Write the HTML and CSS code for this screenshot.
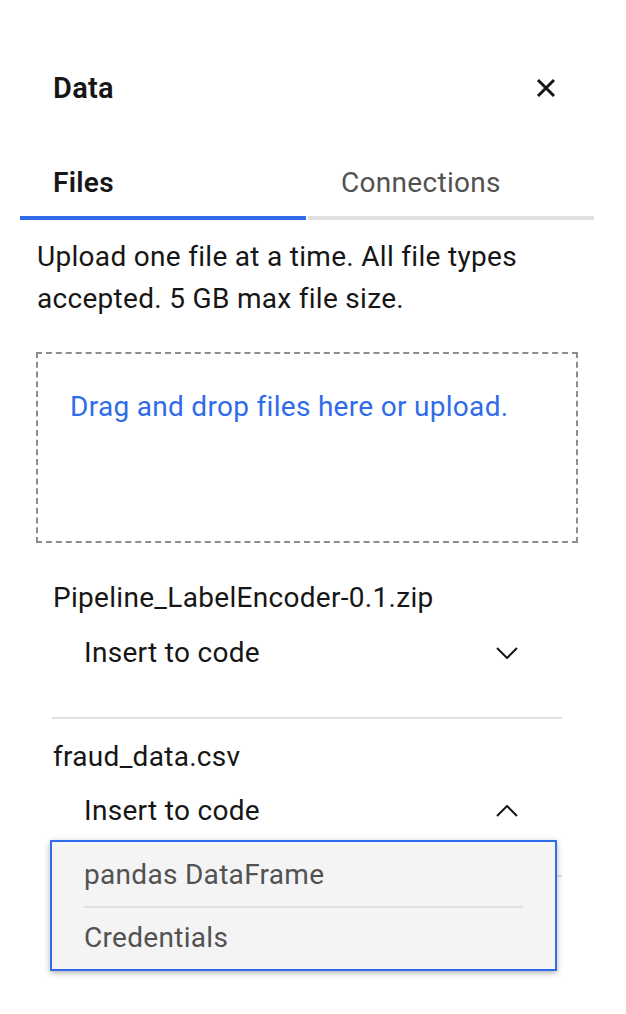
FILE: index.html
```html
<!DOCTYPE html>
<html lang="en">
<head>
<meta charset="utf-8">
<title>Data</title>
<link rel="stylesheet" href="styles.css">
</head>
<body>
<div class="panel">
  <div class="header">
    <h1 class="title">Data</h1>
    <button class="close" aria-label="Close">
      <svg width="20" height="20" viewBox="0 0 20 20"><path d="M2 2 L18 18 M18 2 L2 18" stroke="#161616" stroke-width="3" fill="none"/></svg>
    </button>
  </div>
  <div class="tabs">
    <div class="tab tab-active">Files</div>
    <div class="tab">Connections</div>
  </div>
  <p class="desc">Upload one file at a time. All file types accepted. 5 GB max file size.</p>
  <div class="dropzone">
    <span class="droplink">Drag and drop files here or upload.</span>
  </div>
  <div class="file">
    <div class="file-name">Pipeline_LabelEncoder-0.1.zip</div>
    <div class="insert-row first">
      <span>Insert to code</span>
      <svg class="chev" width="22" height="12" viewBox="0 0 22 12"><polyline points="1,1 11,11 21,1" fill="none" stroke="#161616" stroke-width="2"/></svg>
    </div>
    <div class="divider"></div>
  </div>
  <div class="file">
    <div class="file-name">fraud_data.csv</div>
    <div class="insert-wrap">
      <div class="insert-row second">
        <span>Insert to code</span>
        <svg class="chev" width="22" height="12" viewBox="0 0 22 12"><polyline points="1,11 11,1 21,11" fill="none" stroke="#161616" stroke-width="2"/></svg>
      </div>
      <div class="menu">
        <div class="menu-item item-a">pandas DataFrame</div>
        <div class="menu-sep"></div>
        <div class="menu-item item-b">Credentials</div>
      </div>
    </div>
    <div class="divider"></div>
  </div>
</div>
</body>
</html>
```
FILE: styles.css
```css
* { box-sizing: border-box; }
html, body { margin: 0; padding: 0; background: #ffffff; }
body {
  font-family: Roboto, "Liberation Sans", sans-serif;
  font-size: 28px;
  line-height: 42px;
  letter-spacing: 0.3px;
  color: #161616;
}
.panel { width: 626px; height: 1014px; overflow: hidden; }
.header {
  display: flex;
  justify-content: space-between;
  align-items: center;
  padding: 67px 70px 0 53px;
}
.title {
  margin: 0;
  font-size: 29px;
  line-height: 42px;
  font-weight: 600;
}
.close {
  border: 0;
  background: none;
  padding: 0;
  width: 20px;
  height: 20px;
  display: flex;
}
.tabs {
  display: flex;
  gap: 2px;
  margin: 53px 32px 0 20px;
}
.tab {
  flex: 1;
  padding: 0 0 12px 33px;
  border-bottom: 4px solid #e0e0e0;
  color: #525252;
}
.tab-active {
  border-bottom-color: #2f6beb;
  color: #161616;
  font-weight: 600;
}
.desc {
  margin: 16px 37px 0 37px;
}
.dropzone {
  margin: 32px 48px 0 36px;
  height: 191px;
  border: 2px dashed #8d8d8d;
  padding: 32px 32px 0 32px;
}
.droplink { color: #2f6beb; }
.file {
  margin: 0 64px 0 52px;
  padding-top: 1px;
}
.file-name { margin-top: 33px; padding-left: 1px; }
.file + .file .file-name { margin-top: 16px; }
.insert-wrap { position: relative; }
.insert-row {
  display: flex;
  justify-content: space-between;
  align-items: center;
  padding: 0 44px 0 32px;
}
.insert-row.first { margin-top: 13px; }
.insert-row.second { margin-top: 12px; }
.chev { display: block; }
.divider {
  height: 2px;
  background: #e0e0e0;
  margin-top: 43px;
}
.menu {
  position: absolute;
  left: -2px;
  top: calc(100% + 8px);
  width: 507px;
  height: 131px;
  background: #f4f4f4;
  border: 2px solid #2f6beb;
  box-shadow: 0 2px 6px rgba(0, 0, 0, 0.3);
  padding: 0 32px;
  color: #525252;
  z-index: 2;
}
.item-a { padding: 12px 0 10px; }
.menu-sep { height: 2px; background: #e0e0e0; }
.item-b { padding: 9px 0 10px; }
```
